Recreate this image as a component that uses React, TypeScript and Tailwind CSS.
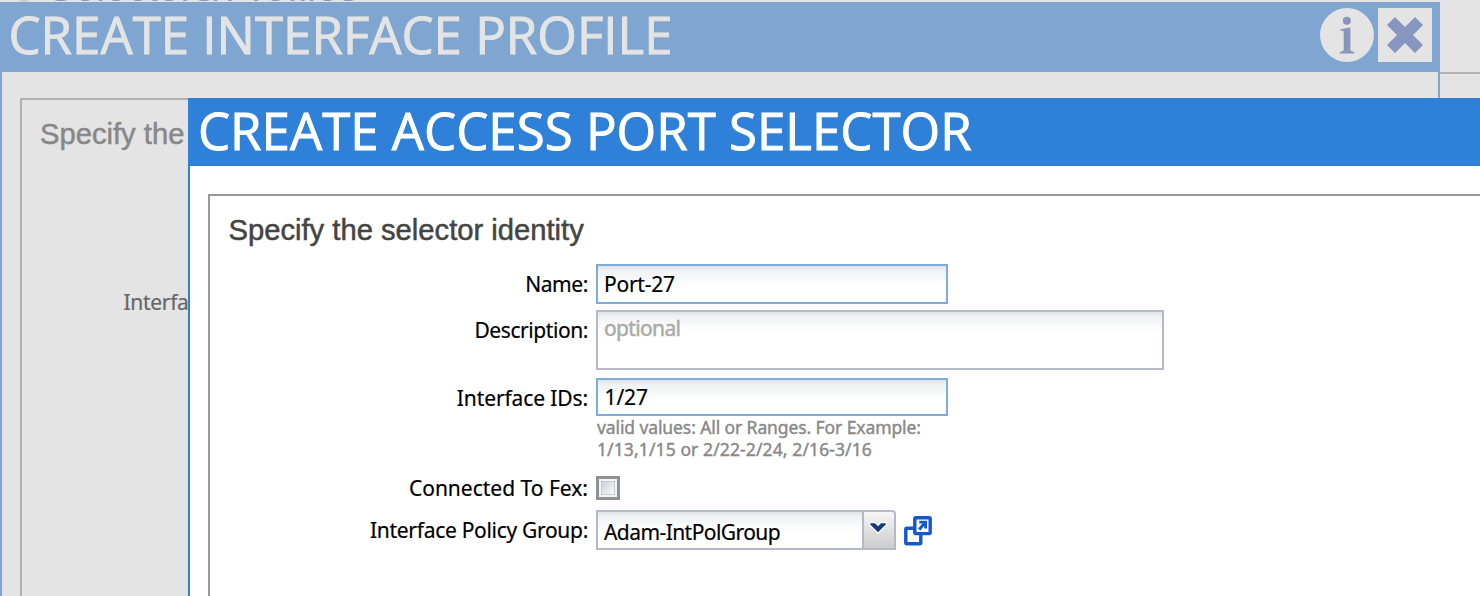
import type { ReactNode } from "react";

const labelBase =
  "w-[378px] shrink-0 text-right leading-[40px] whitespace-nowrap text-black [-webkit-text-stroke:0.2px]";

function Row({
  label,
  tracking,
  className = "",
  children,
}: {
  label: string;
  tracking: string;
  className?: string;
  children: ReactNode;
}) {
  return (
    <div className={`flex items-start gap-[8px] ${className}`}>
      <div className={`${labelBase} ${tracking}`}>{label}</div>
      {children}
    </div>
  );
}

function InfoIcon() {
  return (
    <svg width="54" height="54" viewBox="0 0 54 54">
      <circle cx="27" cy="27" r="27" fill="#e4e4e4" />
      <circle cx="26.8" cy="12.7" r="4" fill="#8796bf" />
      <path
        d="M20.3 22.3V21.2L30.4 19.4V41.6C30.4 43 31.5 43.6 34.3 43.9V45.4H19.9V43.9C22.7 43.6 23.7 43 23.7 41.6V24.6C23.7 23 22.6 22.4 20.3 22.3Z"
        fill="#8796bf"
      />
    </svg>
  );
}

function CloseIcon() {
  return (
    <svg width="54" height="54" viewBox="0 0 54 54">
      <rect width="54" height="54" fill="#e4e4e4" />
      <polygon
        points="17,9 27,19 37,9 45,17 35,27 45,37 37,45 27,35 17,45 9,37 19,27 9,17"
        fill="#8796bf"
      />
    </svg>
  );
}

function OpenIcon() {
  return (
    <svg width="28" height="30" viewBox="0 0 28 30">
      <rect x="1.8" y="12.2" width="15" height="15.6" rx="1" fill="#fff" stroke="#1459cb" strokeWidth="3.4" />
      <rect x="10.8" y="1.8" width="15.4" height="15.8" rx="1" fill="#fff" stroke="#1459cb" strokeWidth="3.4" />
      <path d="M15.3 6.2H21.6V12.6" fill="none" stroke="#1459cb" strokeWidth="2.8" />
      <path d="M21 6.8L15.2 13.4" fill="none" stroke="#1459cb" strokeWidth="3" />
    </svg>
  );
}

const fieldFill =
  "bg-[linear-gradient(to_bottom,#dfe3e7_0px,#eef1f2_4px,#f5f7f7_10px,#ffffff_20px)]";

export default function App() {
  return (
    <div className="relative h-[596px] w-[1480px] overflow-hidden bg-[#e4e4e4] font-['Noto_Sans',sans-serif] text-[21px]">
      {/* page underneath the dialogs */}
      <div className="h-[74px] border-b-2 border-[#b2b2b2]">
        <div className="flex h-[2px] items-start overflow-hidden pl-[20px]">
          <div className="h-[2px] w-[8px] bg-[#cfcfcf]" />
          <div className="-mt-[13px] ml-[19px] whitespace-nowrap font-['Liberation_Sans',sans-serif] text-[40px] leading-[1px] text-[#9297bf]">
            Selectors/Profiles
          </div>
        </div>
      </div>

      {/* interface profile dialog */}
      <div className="absolute top-[2px] left-0 flex h-[600px] w-[1440px] flex-col border-x-2 border-[#7ea6d0] bg-[#e4e4e4]">
        <div className="-mx-[2px] flex h-[70px] shrink-0 items-start justify-between bg-[#7ea6d0] pr-[8px] pl-[8.5px]">
          <h1 className="font-['Open_Sans',sans-serif] text-[51px] leading-[64px] whitespace-nowrap text-[#e4e4e4] [-webkit-text-stroke:0.9px]">
            CREATE INTERFACE PROFILE
          </h1>
          <div className="flex gap-[4px] pt-[6px]">
            <InfoIcon />
            <CloseIcon />
          </div>
        </div>
        <div className="mt-[26px] ml-[18px] flex-1 border-t-2 border-l-2 border-[#b0b0b0]">
          <h2 className="pl-[18px] font-['Liberation_Sans',sans-serif] text-[29.2px] leading-[68px] whitespace-nowrap text-[#888888] [-webkit-text-stroke:0.5px]">
            Specify the
          </h2>
          <div className="mt-[114px] pl-[101.5px] leading-[40px] tracking-[-0.3px] whitespace-nowrap text-[#666666] [-webkit-text-stroke:0.2px]">
            Interfa
          </div>
        </div>
      </div>

      {/* access port selector dialog */}
      <div className="absolute top-[98px] left-[188px] flex h-[520px] w-[1300px] flex-col border-l-2 border-[#2f80d8] bg-white">
        <div className="h-[68px] shrink-0 bg-[#2f80d8] pl-[8px]">
          <h1 className="font-['Open_Sans',sans-serif] text-[51px] leading-[64px] whitespace-nowrap text-white [-webkit-text-stroke:0.9px]">
            CREATE ACCESS PORT SELECTOR
          </h1>
        </div>
        <div className="mt-[28px] ml-[18px] flex-1 border-t-2 border-l-2 border-[#999999]">
          <h2 className="pl-[18.5px] font-['Liberation_Sans',sans-serif] text-[29.2px] leading-[68px] whitespace-nowrap text-[#444444] [-webkit-text-stroke:0.5px]">
            Specify the selector identity
          </h2>

          <Row label="Name:" tracking="tracking-[-0.4px]" className="h-[46px]">
            <div className={`h-[40px] w-[352px] border-2 border-[#7eacd8] pl-[6px] leading-[36px] tracking-[-0.25px] text-black [-webkit-text-stroke:0.2px] ${fieldFill}`}>
              Port-27
            </div>
          </Row>

          <Row label="Description:" tracking="tracking-[-0.42px]" className="h-[68px]">
            <div className={`h-[60px] w-[568px] border-2 border-[#b5b8cb] pl-[6px] leading-[32px] tracking-[-0.65px] text-[#aaaaaa] [-webkit-text-stroke:0.5px] ${fieldFill}`}>
              optional
            </div>
          </Row>

          <Row label="Interface IDs:" tracking="tracking-[-0.11px]" className="h-[90px]">
            <div>
              <div className={`h-[38px] w-[352px] border-2 border-[#7eacd8] pl-[6.5px] leading-[35px] tracking-[-0.1px] text-black [-webkit-text-stroke:0.2px] ${fieldFill}`}>
                1/27
              </div>
              <div className="pl-px text-[17.5px] leading-[22px] whitespace-nowrap text-[#888888] [-webkit-text-stroke:0.4px]">
                <div className="tracking-[-0.1px]">valid values: All or Ranges. For Example:</div>
                <div className="tracking-[0.11px]">1/13,1/15 or 2/22-2/24, 2/16-3/16</div>
              </div>
            </div>
          </Row>

          <Row label="Connected To Fex:" tracking="tracking-normal" className="h-[42px]">
            <div className="mt-[8px] h-[24px] w-[24px] border-[3px] border-[#8f9294] bg-[#f4f4f4] p-[2px]">
              <div className="h-[14px] w-[14px] border border-[#c3c8ce] bg-linear-to-br from-[#ccd2d8] to-[#fafafa]" />
            </div>
          </Row>

          <Row label="Interface Policy Group:" tracking="tracking-[-0.3px]" className="h-[40px]">
            <div className="flex items-start gap-[8px]">
              <div className="flex h-[40px] w-[300px]">
                <div className={`w-[266px] border-2 border-r-0 border-[#b5b8cb] pt-[2px] pl-[6px] leading-[36px] tracking-[-0.57px] whitespace-nowrap text-black [-webkit-text-stroke:0.2px] ${fieldFill}`}>
                  Adam-IntPolGroup
                </div>
                <div className="flex w-[34px] justify-center rounded-tr-[4px] border-2 border-[#b5b8cb] bg-linear-to-b from-[#f6f6f6] to-[#cccccc] pt-[7px] pr-[3px]">
                  <svg width="20" height="18" viewBox="0 0 20 18" className="shrink-0">
                    <path
                      d="M2.2 4.2H7L10 7.2L13 4.2H17.8V5.4L10 13.2L2.2 5.4Z"
                      fill="#173a7c"
                      stroke="#ffffff"
                      strokeWidth="2.4"
                      paintOrder="stroke"
                    />
                  </svg>
                </div>
              </div>
              <div className="pt-[6px]">
                <OpenIcon />
              </div>
            </div>
          </Row>
        </div>
      </div>
    </div>
  );
}
